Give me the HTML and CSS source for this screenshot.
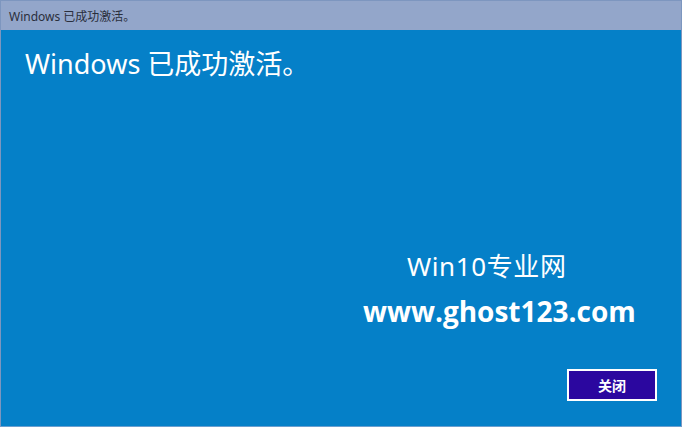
FILE: index.html
```html
<!DOCTYPE html>
<html lang="zh-CN">
<head>
<meta charset="utf-8">
<title>Windows 已成功激活。</title>
<link rel="stylesheet" href="styles.css">
</head>
<body>
<div class="window">
  <div class="titlebar">Windows 已成功激活。</div>
  <div class="content">
    <h1 class="heading">Windows 已成功激活。</h1>
    <div class="watermark">
      <div class="wm-title">Win10专业网</div>
      <div class="wm-url">www.ghost123.com</div>
    </div>
    <div class="actions">
      <button class="btn" type="button">关闭</button>
    </div>
  </div>
</div>
</body>
</html>
```

FILE: styles.css
```css
html, body {
  margin: 0;
  padding: 0;
  width: 682px;
  height: 427px;
  overflow: hidden;
  background: #0580c8;
}
.window {
  box-sizing: border-box;
  width: 682px;
  height: 427px;
  display: flex;
  flex-direction: column;
  border: 1px solid #7d96bf;
  border-bottom-color: #6a9fd0;
  font-family: "Noto Sans", "Noto Sans CJK SC", sans-serif;
}
.titlebar {
  height: 29px;
  box-sizing: border-box;
  padding-left: 8px;
  display: flex;
  align-items: center;
  background: #93a6ca;
  color: #2a2f3c;
  font-size: 12px;
  flex-shrink: 0;
}
.content {
  flex: 1;
  background: #0580c8;
  color: #ffffff;
  display: flex;
  flex-direction: column;
}
.heading {
  margin: 0;
  padding: 18px 0 0 24px;
  font-size: 27px;
  line-height: 32px;
  font-weight: normal;
}
.watermark {
  margin-top: 171px;
  margin-left: 362px;
  display: flex;
  flex-direction: column;
  align-items: flex-start;
}
.wm-title {
  margin-left: 44px;
  font-size: 26px;
  letter-spacing: 0.6px;
  line-height: 30px;
}
.wm-url {
  margin-top: 11px;
  font-family: "Open Sans", sans-serif;
  font-weight: bold;
  font-size: 28px;
  line-height: 38px;
}
.actions {
  margin-top: 39px;
  display: flex;
  justify-content: flex-end;
  padding-right: 24px;
}
.btn {
  box-sizing: border-box;
  width: 90px;
  height: 32px;
  background: #2b079f;
  border: 2px solid #ffffff;
  color: #ffffff;
  font-family: "Noto Sans CJK SC", sans-serif;
  font-size: 14px;
  font-weight: bold;
  padding: 0;
}
```
